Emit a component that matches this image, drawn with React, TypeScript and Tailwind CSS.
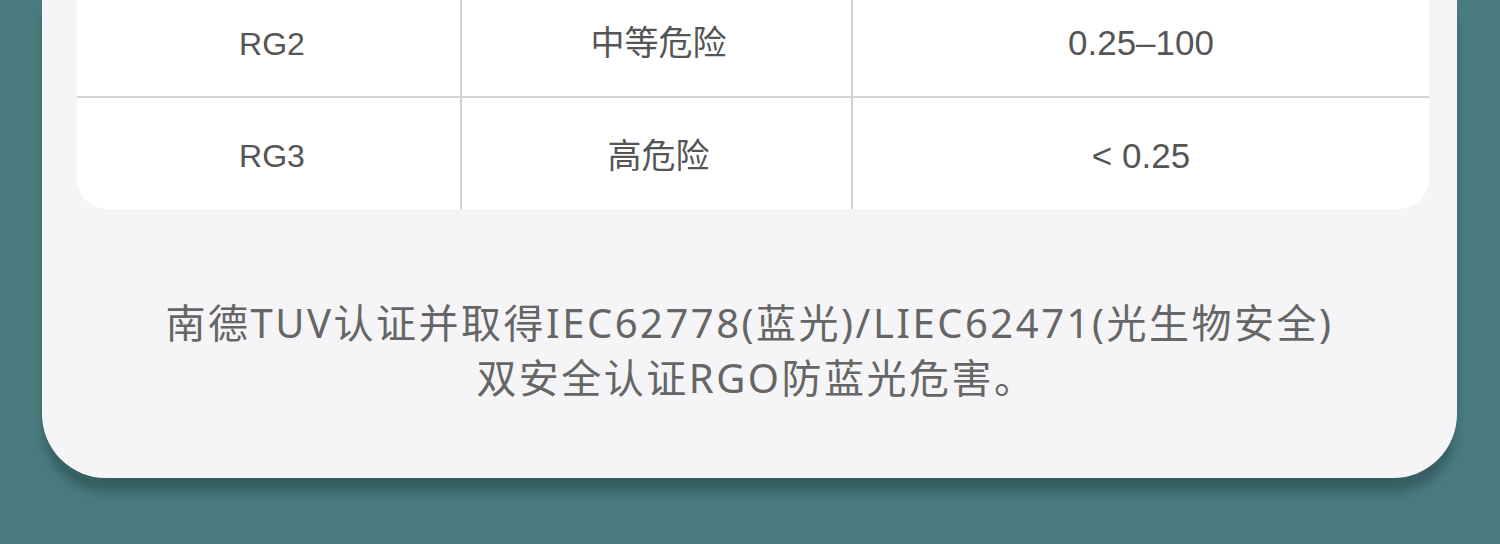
import React from "react";

const rows = [
  { level: "RG2", risk: "中等危险", value: "0.25–100" },
  { level: "RG3", risk: "高危险", value: "< 0.25" },
];

export default function App() {
  return (
    <div className="w-[1500px] h-[544px] overflow-hidden bg-[#4a7a7e]">
      {/* 卡片 */}
      <div className="ml-[42px] w-[1415px] h-[478px] bg-[#f5f5f7] rounded-b-[64px] shadow-[0_16px_8px_-2px_rgba(20,45,48,0.35)] overflow-hidden">
        <div className="ml-[35px] mr-[28px] -mt-[14px] bg-white rounded-b-[30px] overflow-hidden text-[#555] font-['Liberation_Sans','Noto_Sans_CJK_SC',sans-serif]">
          {rows.map((r, i) => (
            <div
              key={r.level}
              className={
                i === 0
                  ? "flex h-[112px] border-b-2 border-[#d4d4d4]"
                  : "flex h-[111px]"
              }
            >
              <div className="w-[385px] flex items-center justify-center border-r-2 border-[#d0d0d0] pt-[5px] pl-[7px] text-[32px]">
                {r.level}
              </div>
              <div className="w-[391px] flex items-center justify-center border-r-2 border-[#d0d0d0] pt-[5px] pl-[4px] text-[34px]">
                {r.risk}
              </div>
              <div className="flex-1 flex items-center justify-center pt-[5px] text-[35px]">
                {r.value}
              </div>
            </div>
          ))}
        </div>

        <div className="mt-[86px] text-center text-[#666] text-[40px] leading-[55px] tracking-[2.5px] font-['Noto_Sans','Noto_Sans_CJK_SC',sans-serif]">
          <p>南德TUV认证并取得IEC62778(蓝光)/LIEC62471(光生物安全)</p>
          <p className="pl-[14px]">双安全认证RGO防蓝光危害。</p>
        </div>
      </div>
    </div>
  );
}
